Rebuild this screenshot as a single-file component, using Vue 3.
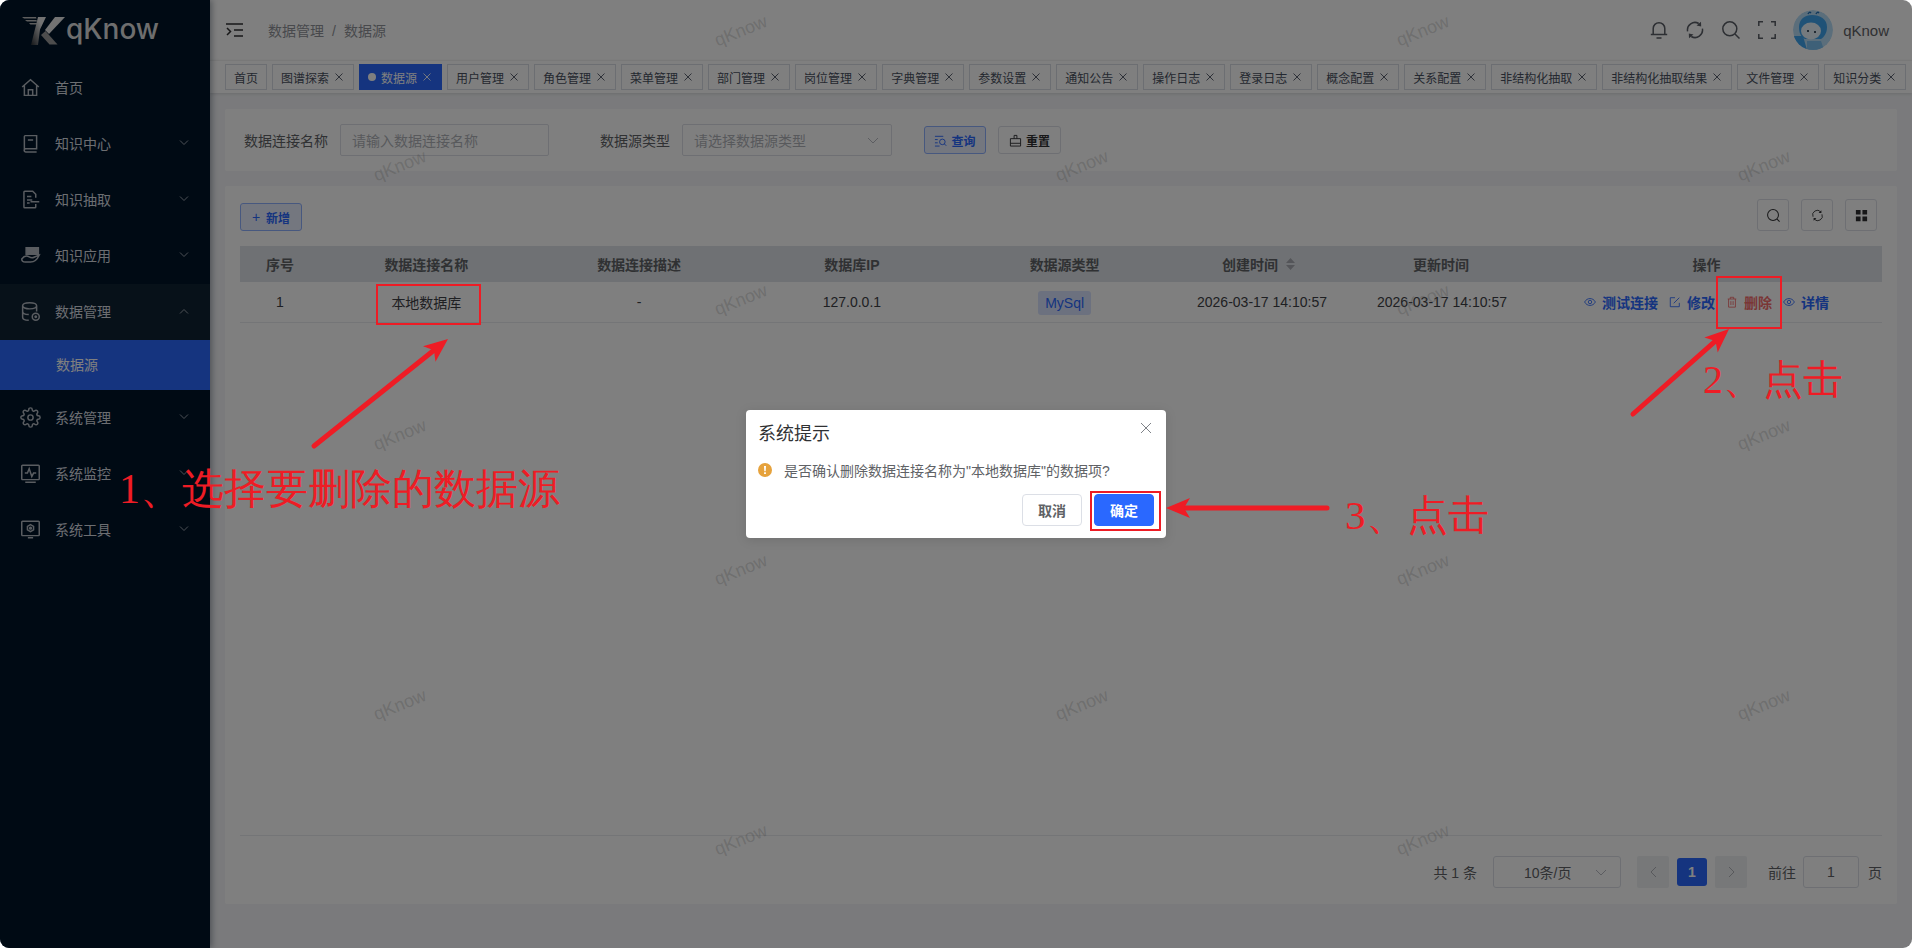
<script setup>
const gear =
  'M19.4 15a1.65 1.65 0 0 0 .33 1.82l.06.06a2 2 0 0 1 0 2.83 2 2 0 0 1-2.83 0l-.06-.06a1.65 1.65 0 0 0-1.82-.33 1.65 1.65 0 0 0-1 1.51V21a2 2 0 0 1-2 2 2 2 0 0 1-2-2v-.09A1.65 1.65 0 0 0 9 19.4a1.65 1.65 0 0 0-1.82.33l-.06.06a2 2 0 0 1-2.83 0 2 2 0 0 1 0-2.83l.06-.06a1.65 1.65 0 0 0 .33-1.82 1.65 1.65 0 0 0-1.51-1H3a2 2 0 0 1-2-2 2 2 0 0 1 2-2h.09A1.65 1.65 0 0 0 4.6 9a1.65 1.65 0 0 0-.33-1.82l-.06-.06a2 2 0 0 1 0-2.83 2 2 0 0 1 2.83 0l.06.06a1.65 1.65 0 0 0 1.82.33H9a1.65 1.65 0 0 0 1-1.51V3a2 2 0 0 1 2-2 2 2 0 0 1 2 2v.09a1.65 1.65 0 0 0 1 1.51 1.65 1.65 0 0 0 1.82-.33l.06-.06a2 2 0 0 1 2.83 0 2 2 0 0 1 0 2.83l-.06.06a1.65 1.65 0 0 0-.33 1.82V9a1.65 1.65 0 0 0 1.51 1H21a2 2 0 0 1 2 2 2 2 0 0 1-2 2h-.09a1.65 1.65 0 0 0-1.51 1z'

const menus = [
  { label: '首页', paths: ['M2.5 11.5 12 3l9.5 8.5M5 9.5V21h14V9.5M9.5 21v-6.5h5V21'] },
  { label: '知识中心', arrow: true, paths: ['M5 20V4a1 1 0 0 1 1-1h13v15H6.5a1.8 1.8 0 0 0 0 3.6H19M9 8h6'] },
  {
    label: '知识抽取',
    arrow: true,
    paths: ['M18 10V6l-3.5-3.5H5.5a1 1 0 0 0-1 1v17a1 1 0 0 0 1 1H17a1 1 0 0 0 1-1v-3.5M8 8.5h5M8 12.5h6M8 16h3M12 14.5h10'],
  },
  {
    label: '知识应用',
    arrow: true,
    solid: 'M7 3h14v7.5H7z',
    paths: ['M2 16c2.5-3.5 6-4 8.5-2.5 2 1.2 4 1.2 5.5.5l6-2.5c-1.5 3.5-5 8-10 8H6c-2.5 0-4-1.5-4-3.5z'],
  },
  {
    label: '数据管理',
    arrow: true,
    open: true,
    paths: [
      'M3 5.5C3 3.5 6.5 2 11 2s8 1.5 8 3.5S15.5 9 11 9 3 7.5 3 5.5zM3 5.5v13c0 2 3 3.5 7 3.5M19 5.5V12M3 12c0 2 3 3.5 7 3.5',
      'M18 14a4 4 0 1 0 0 8 4 4 0 0 0 0-8zM18 17.2a.8.8 0 1 0 0 1.6.8.8 0 0 0 0-1.6z',
    ],
  },
  { label: '系统管理', arrow: true, paths: [gear, 'M12 9a3 3 0 1 0 0 6 3 3 0 0 0 0-6z'] },
  {
    label: '系统监控',
    arrow: true,
    paths: ['M3 2.5h18a1 1 0 0 1 1 1V18a1 1 0 0 1-1 1H3a1 1 0 0 1-1-1V3.500a1 1 0 0 1 1-1zM6 22h12M5.500 11.500h3l2-5 3 9 2-4h3'],
  },
  {
    label: '系统工具',
    arrow: true,
    paths: ['M3 2.500h18a1 1 0 0 1 1 1V18a1 1 0 0 1-1 1H3a1 1 0 0 1-1-1V3.500a1 1 0 0 1 1-1zM9 21.500h6', 'M12 6.500l3.500 2v4l-3.500 2-3.500-2v-4zM12 9.500a1 1 0 1 0 0 2 1 1 0 0 0 0-2z'],
  },
]

const tabs = [
  { label: '首页', fixed: true },
  { label: '图谱探索' },
  { label: '数据源', active: true },
  { label: '用户管理' },
  { label: '角色管理' },
  { label: '菜单管理' },
  { label: '部门管理' },
  { label: '岗位管理' },
  { label: '字典管理' },
  { label: '参数设置' },
  { label: '通知公告' },
  { label: '操作日志' },
  { label: '登录日志' },
  { label: '概念配置' },
  { label: '关系配置' },
  { label: '非结构化抽取' },
  { label: '非结构化抽取结果' },
  { label: '文件管理' },
  { label: '知识分类' },
]

const watermarks = []
const rowTops = [31, 166, 300, 435, 570, 705, 840]
rowTops.forEach((y, index) => {
  const xs = index % 2 === 0 ? [741, 1423] : [400, 1082, 1764]
  xs.forEach((x) => watermarks.push({ left: `${x - 210}px`, top: `${y}px` }))
})

// arrow line and head worked out from its two ends
const makeArrow = (x1, y1, x2, y2) => {
  const angle = Math.atan2(y2 - y1, x2 - x1)
  const point = (back, side) => {
    const px = x2 - back * Math.cos(angle) - side * Math.sin(angle)
    const py = y2 - back * Math.sin(angle) + side * Math.cos(angle)
    return `${px.toFixed(1)},${py.toFixed(1)}`
  }
  return {
    x1,
    y1,
    x2: Number(point(16, 0).split(',')[0]),
    y2: Number(point(16, 0).split(',')[1]),
    head: [point(0, 0), point(24, 10), point(18, 0), point(24, -10)].join(' '),
  }
}

const arrows = [makeArrow(314, 446, 448, 339), makeArrow(1633, 414, 1729, 329), makeArrow(1327, 508, 1166, 508)]
</script>

<template>
  <div class="page">
    <aside class="side">
      <div class="logo">
        <svg class="logo__mark" viewBox="20 16 46 31">
          <defs>
            <linearGradient id="logoFade" x1="0" y1="1" x2="1" y2="0">
              <stop offset="0" stop-color="#2a2d31" />
              <stop offset="0.7" stop-color="#e6e6e6" />
            </linearGradient>
          </defs>
          <path fill="#bdbdbd" d="M22 18h14l.5 1.600H24zM25 21h11.500l.5 1.500H27zM29 24h8l.4 1.500h-7z" />
          <path fill="url(#logoFade)" d="M38 18h8l-6 12.500L38 46h-7z" />
          <path fill="#e6e6e6" d="M55 18h10L49 35l-4-4z" />
          <path fill="#9a9a9a" d="M45.500 32 57.500 45.500h-8L41 36z" />
        </svg>
        <span class="logo__text">qKnow</span>
      </div>

      <nav class="menu">
        <template v-for="item in menus" :key="item.label">
          <div class="menu__item" :class="{ 'is-open': item.open }">
            <svg class="menu__icon" viewBox="0 0 24 24">
              <path v-if="item.solid" class="menu__solid" :d="item.solid" />
              <path v-for="d in item.paths" :key="d" :d="d" />
            </svg>
            <span class="menu__label">{{ item.label }}</span>
            <svg v-if="item.arrow" class="menu__arrow" viewBox="0 0 10 6">
              <path :d="item.open ? 'M1 5.500 5 1.500l4 4' : 'M1 .5l4 4 4-4'" />
            </svg>
          </div>
          <div v-if="item.open" class="menu__sub">数据源</div>
        </template>
      </nav>
    </aside>

    <div class="main">
      <header class="top">
        <svg class="top__toggle" viewBox="0 0 17 14">
          <path d="M0 1h17M8 7h9M8 13h9M1 5l3.500 3.500L1 12" />
        </svg>
        <div class="crumb">
          <span>数据管理</span>
          <span class="crumb__sep">/</span>
          <span>数据源</span>
        </div>
        <div class="top__right">
          <svg class="top__icon" viewBox="0 0 18 18">
            <path d="M3.200 13.500V7.500a5.800 5.800 0 0 1 11.600 0v6M.8 13.500h16.400M6.500 17h5" />
          </svg>
          <svg class="top__icon" viewBox="0 0 18 18">
            <path d="M1.600 10.300A7.500 7.500 0 0 1 12.750 2.500M16.400 7.700A7.500 7.500 0 0 1 5.250 15.500" />
            <path class="top__solid" d="M15 .8 15.200 5.500 10.500 4.500zM3 17.200 2.800 12.500 7.500 13.500z" />
          </svg>
          <svg class="top__icon" viewBox="0 0 18 18">
            <circle cx="7.800" cy="7.800" r="7" />
            <path d="m13 13 4.500 4.500" />
          </svg>
          <svg class="top__icon" viewBox="0 0 18 18">
            <path d="M.8 5V.8h4.200M13 .8h4.200V5M17.200 13v4.200H13M5 17.200H.8V13" />
          </svg>
          <svg class="avatar" viewBox="0 0 40 40">
            <circle cx="20" cy="20" r="20" fill="#b6dcf6" />
            <path fill="#3fa4ee" d="M6 17c0-8 6-12 13-12 8 0 15 4 15 12 0 6-3 10-6 12H12c-4-2-6-6-6-12z" />
            <ellipse cx="18" cy="21" rx="10" ry="8.500" fill="#e9f5fd" />
            <circle cx="15" cy="21" r="1" fill="#123" />
            <circle cx="22" cy="22" r="1" fill="#123" />
            <path d="M15 4c1-2 2-2 3-1M23 4c1-2 2-2 3-1" fill="none" stroke="#1d6fb8" stroke-width="1.500" />
            <path fill="#3fa4ee" d="M0 26h10l4 14H4z" />
            <path fill="#7cc0f0" d="M14 31h14l3 9H14z" />
          </svg>
          <span class="top__name">qKnow</span>
        </div>
      </header>

      <div class="tabs">
        <div v-for="tab in tabs" :key="tab.label" class="tab" :class="{ 'is-active': tab.active, 'is-fixed': tab.fixed }">
          <i v-if="tab.active" class="tab__dot"></i>
          <span>{{ tab.label }}</span>
          <svg v-if="!tab.fixed" class="tab__close" viewBox="0 0 8 8"><path d="m.5.5 7 7M7.500.5l-7 7" /></svg>
        </div>
      </div>

      <div class="content">
        <section class="search card">
          <label class="search__label">数据连接名称</label>
          <div class="field field--input">请输入数据连接名称</div>
          <label class="search__label search__label--next">数据源类型</label>
          <div class="field field--select">
            <span>请选择数据源类型</span>
            <svg class="chevron" viewBox="0 0 12 7"><path d="m1 1 5 5 5-5" /></svg>
          </div>
          <button type="button" class="btn btn--query">
            <svg viewBox="0 0 14 14"><path d="M1 2.500h9M1 6h3M1 9.500h3M1 13h5" /><circle cx="9" cy="8.500" r="3" /><path d="m11.200 10.700 2 2" /></svg>
            查询
          </button>
          <button type="button" class="btn btn--reset">
            <svg viewBox="0 0 14 14"><path d="M5.500 5V1.500h3V5M1.500 5h11v8h-11zM1.500 10h11" /></svg>
            重置
          </button>
        </section>

        <section class="board card">
          <div class="board__bar">
            <button type="button" class="btn btn--add"><span class="btn__plus">+</span>新增</button>
            <div class="board__tools">
              <button type="button" class="tool">
                <svg viewBox="0 0 16 16"><circle cx="7.500" cy="7.500" r="5.800" /><path d="m11.800 11.800 2.700 2.700" /></svg>
              </button>
              <button type="button" class="tool">
                <svg class="tool__small" viewBox="0 0 16 16">
                  <path d="M2.500 9.500A5.700 5.700 0 0 1 12 3.500M13.500 6.500A5.700 5.700 0 0 1 4 12.500" />
                  <path class="tool__solid" d="M12.800 1.500V5H9.300zM3.200 14.500V11h3.500z" />
                </svg>
              </button>
              <button type="button" class="tool">
                <svg viewBox="0 0 16 16"><path class="tool__solid" d="M2 2h5v5H2zM9 2h5v5H9zM2 9h5v5H2zM9 9h5v5H9z" /></svg>
              </button>
            </div>
          </div>

          <div class="table">
            <div class="table__row table__row--head">
              <div>序号</div>
              <div>数据连接名称</div>
              <div>数据连接描述</div>
              <div>数据库IP</div>
              <div>数据源类型</div>
              <div class="table__sort">
                创建时间
                <svg viewBox="0 0 10 12"><path d="M5 0l4.500 5H.5zM5 12 .5 7h9z" /></svg>
              </div>
              <div>更新时间</div>
              <div>操作</div>
            </div>
            <div class="table__row table__row--body">
              <div>1</div>
              <div>本地数据库</div>
              <div>-</div>
              <div>127.0.0.1</div>
              <div><span class="tag">MySql</span></div>
              <div class="table__date">2026-03-17 14:10:57</div>
              <div class="table__date">2026-03-17 14:10:57</div>
              <div class="actions">
                <a class="action">
                  <svg viewBox="0 0 14 14"><path d="M.7 7C2.300 4.200 4.500 3 7 3s4.700 1.200 6.300 4C11.700 9.800 9.500 11 7 11S2.300 9.800.7 7z" /><circle cx="7" cy="7" r="2" /></svg>
                  测试连接
                </a>
                <a class="action">
                  <svg viewBox="0 0 14 14"><path d="M12 8v4.500H1.500V2H7M5.500 8.500 12 2" /></svg>
                  修改
                </a>
                <a class="action action--danger">
                  <svg viewBox="0 0 14 14"><path d="M2 3.500h10M5 3.500v-2h4v2M3 3.500v9.500h8V3.500M5.700 6v4.500M8.300 6v4.500" /></svg>
                  删除
                </a>
                <a class="action">
                  <svg viewBox="0 0 14 14"><path d="M.7 7C2.300 4.200 4.500 3 7 3s4.700 1.200 6.300 4C11.700 9.800 9.500 11 7 11S2.300 9.800.7 7z" /><circle cx="7" cy="7" r="2" /></svg>
                  详情
                </a>
              </div>
            </div>
          </div>

          <div class="pager">
            <span class="pager__total">共 1 条</span>
            <div class="pager__size">
              <span>10条/页</span>
              <svg class="chevron" viewBox="0 0 12 7"><path d="m1 1 5 5 5-5" /></svg>
            </div>
            <button type="button" class="pager__btn">
              <svg viewBox="0 0 7 12"><path d="M6 1 1 6l5 5" /></svg>
            </button>
            <span class="pager__num">1</span>
            <button type="button" class="pager__btn">
              <svg viewBox="0 0 7 12"><path d="m1 1 5 5-5 5" /></svg>
            </button>
            <span class="pager__goto">前往</span>
            <div class="pager__input">1</div>
            <span class="pager__unit">页</span>
          </div>
        </section>
      </div>

      <span v-for="mark in watermarks" :key="mark.left + mark.top" class="watermark" :style="mark">qKnow</span>
    </div>

    <div class="mask">
      <div class="dialog">
        <div class="dialog__title">系统提示</div>
        <svg class="dialog__close" viewBox="0 0 12 12"><path d="m1 1 10 10M11 1 1 11" /></svg>
        <div class="dialog__msg">
          <svg class="dialog__warn" viewBox="0 0 14 14">
            <circle cx="7" cy="7" r="7" fill="#e6a23c" />
            <path d="M6 3h2l-.3 5.200H6.300zM6.100 9.300h1.800v1.800H6.100z" fill="#fff" />
          </svg>
          <span>是否确认删除数据连接名称为"本地数据库"的数据项?</span>
        </div>
        <div class="dialog__foot">
          <button type="button" class="dialog__btn">取消</button>
          <button type="button" class="dialog__btn dialog__btn--ok">确定</button>
        </div>
      </div>
    </div>

    <svg class="marks" viewBox="0 0 1912 948">
      <rect x="377" y="285" width="103" height="39" />
      <rect x="1717" y="277" width="64" height="51" />
      <rect x="1091" y="492" width="69" height="38" />
      <g v-for="arrow in arrows" :key="arrow.x1">
        <line :x1="arrow.x1" :y1="arrow.y1" :x2="arrow.x2" :y2="arrow.y2" />
        <polygon :points="arrow.head" />
      </g>
    </svg>
    <div class="note note--one">1、选择要删除的数据源</div>
    <div class="note note--two">2、点击</div>
    <div class="note note--three">3、点击</div>
  </div>
</template>

<style>
html,
body {
  margin: 0;
  background: #fff;
  overflow: hidden;
}
</style>

<style scoped>
.page {
  position: relative;
  display: flex;
  width: 100vw;
  height: 100vh;
  overflow: hidden;
  border-radius: 9px;
  background: #f4f5f8;
  font-family: 'Liberation Sans', 'Noto Sans CJK SC', sans-serif;
  font-size: 14px;
  color: #303133;
}

.side {
  position: relative;
  z-index: 2;
  flex: 0 0 210px;
  background: #001529;
  box-shadow: 2px 0 6px rgba(0, 21, 41, 0.35);
}

.logo {
  display: flex;
  align-items: center;
  height: 60px;
  padding-left: 20px;
  box-sizing: border-box;
}

.logo__mark {
  width: 46px;
  height: 31px;
  flex-shrink: 0;
}

.logo__text {
  font-family: Inter, 'Liberation Sans', sans-serif;
  font-size: 28px;
  font-weight: 500;
  line-height: 1;
  color: #dcdcdc;
  margin-top: -2px;
}

.menu__item {
  display: flex;
  align-items: center;
  height: 56px;
  padding: 0 0 2px 20px;
  color: #d8dce2;
  box-sizing: border-box;
}

.menu__item.is-open {
  background: #0f2233;
}

.menu__icon {
  width: 21px;
  height: 21px;
  flex-shrink: 0;
  margin-right: 14px;
  fill: none;
  stroke: #b4bac2;
  stroke-width: 1.7;
}

.menu__solid {
  fill: #b4bac2;
}

.menu__label {
  flex: 1;
}

.menu__arrow {
  width: 10px;
  height: 6px;
  margin-right: 21px;
  fill: none;
  stroke: #9aa2ac;
  stroke-width: 1;
}

.menu__sub {
  height: 50px;
  padding-left: 56px;
  line-height: 50px;
  background: #2a68ff;
  color: #fff;
}

.main {
  position: relative;
  flex: 1;
  min-width: 0;
  display: flex;
  flex-direction: column;
}

.top {
  display: flex;
  align-items: center;
  flex: 0 0 60px;
  padding: 0 23px 0 16px;
  background: #fff;
  box-sizing: border-box;
}

.top__toggle {
  width: 17px;
  height: 14px;
  margin-right: 25px;
  fill: none;
  stroke: #303133;
  stroke-width: 1.500;
}

.crumb {
  display: flex;
  align-items: baseline;
  gap: 8px;
  color: #909399;
  font-size: 14px;
}

.crumb__sep {
  color: #909399;
}

.top__right {
  margin-left: auto;
  display: flex;
  align-items: center;
}

.top__icon {
  width: 18px;
  height: 18px;
  margin-right: 18px;
  fill: none;
  stroke: #5a5e66;
  stroke-width: 1.500;
}

.top__solid {
  fill: #5a5e66;
  stroke: none;
}

.avatar {
  width: 40px;
  height: 40px;
  margin-left: -1px;
  margin-right: 10px;
  border-radius: 50%;
}

.top__name {
  font-size: 15px;
  color: #606266;
}

.tabs {
  position: relative;
  z-index: 1;
  display: flex;
  align-items: center;
  gap: 5px;
  flex: 0 0 33px;
  padding-left: 15px;
  background: #fff;
  border-top: 1px solid #f0f0f0;
  box-shadow: 0 1px 3px rgba(0, 0, 0, 0.12);
  box-sizing: border-box;
  overflow: hidden;
}

.tab {
  flex-shrink: 0;
  display: flex;
  align-items: center;
  height: 26px;
  padding: 0 10px 0 8px;
  border: 1px solid #d8dce5;
  background: #fff;
  font-size: 12px;
  color: #495060;
  box-sizing: border-box;
}

.tab.is-fixed {
  padding: 0 8px;
}

.tab.is-active {
  border-color: #2a68ff;
  background: #2a68ff;
  color: #fff;
}

.tab__dot {
  width: 8px;
  height: 8px;
  margin-right: 5px;
  border-radius: 50%;
  background: #fff;
}

.tab__close {
  width: 8px;
  height: 8px;
  margin-left: 6px;
  fill: none;
  stroke: currentColor;
  stroke-width: 0.9;
}

.content {
  flex: 1;
  min-height: 0;
  display: flex;
  flex-direction: column;
  gap: 15px;
  padding: 16px 15px 44px;
}

.card {
  border-radius: 2px;
  background: #fff;
}

.search {
  flex: 0 0 62px;
  display: flex;
  align-items: center;
  padding-left: 19px;
  box-sizing: border-box;
}

.search__label {
  margin-right: 12px;
  color: #606266;
}

.search__label--next {
  margin-left: 51px;
}

.field {
  display: flex;
  align-items: center;
  justify-content: space-between;
  width: 209px;
  height: 32px;
  padding: 0 12px 0 11px;
  border: 1px solid #dcdfe6;
  border-radius: 2px;
  color: #b0b3b9;
  box-sizing: border-box;
}

.field--select {
  width: 210px;
  margin-right: 32px;
}

.chevron {
  width: 12px;
  height: 7px;
  fill: none;
  stroke: #b8bbc2;
  stroke-width: 1;
}

.btn {
  display: inline-flex;
  align-items: center;
  justify-content: center;
  gap: 4px;
  height: 28px;
  padding: 0;
  border: 1px solid #dcdfe6;
  border-radius: 3px;
  background: #fff;
  font: inherit;
  font-size: 12px;
  font-weight: 600;
  color: #303133;
}

.btn svg {
  width: 13px;
  height: 13px;
  fill: none;
  stroke: currentColor;
  stroke-width: 1;
}

.btn--query {
  width: 62px;
  margin-right: 12px;
  border-color: #8fb0ff;
  background: #e9efff;
  color: #2a68ff;
}

.btn--reset {
  width: 63px;
}

.btn--add {
  width: 62px;
  gap: 6px;
  border-color: #8fb0ff;
  background: #e9efff;
  color: #2a68ff;
}

.btn__plus {
  font-size: 14px;
  font-weight: 400;
}

.board {
  flex: 1;
  min-height: 0;
  display: flex;
  flex-direction: column;
  padding: 13px 15px 16px;
}

.board__bar {
  display: flex;
  align-items: flex-end;
  justify-content: space-between;
  padding-right: 5px;
  margin-bottom: 15px;
}

.board__tools {
  display: flex;
  gap: 12px;
}

.tool {
  display: flex;
  align-items: center;
  justify-content: center;
  width: 32px;
  height: 32px;
  padding: 0;
  border: 1px solid #dcdfe6;
  border-radius: 3px;
  background: #fff;
}

.tool svg {
  width: 15px;
  height: 15px;
  fill: none;
  stroke: #303133;
  stroke-width: 1.100;
}

.tool svg.tool__small {
  width: 13px;
  height: 13px;
}

.tool__solid {
  fill: #303133;
  stroke: none;
}

.table {
  flex: 1;
  min-height: 0;
  border-bottom: 1px solid #e8eaee;
}

.table__row {
  display: grid;
  grid-template-columns: 80px repeat(4, 1fr) 180px 180px 351px;
  align-items: center;
  text-align: center;
}

.table__row--head {
  height: 36px;
  background: #dfe2e8;
  color: #606266;
  font-weight: 600;
}

.table__row--body {
  height: 41px;
  border-bottom: 1px solid #e8eaee;
  box-sizing: border-box;
  color: #3f4146;
}

.table__date {
  padding-left: 2px;
}

.table__sort {
  display: flex;
  align-items: center;
  justify-content: center;
  gap: 7px;
  padding-right: 4px;
}

.table__sort svg {
  width: 11px;
  height: 12px;
  fill: #a8abb2;
}

.tag {
  display: inline-block;
  height: 24px;
  margin-top: 2px;
  padding: 0 7px;
  line-height: 24px;
  border-radius: 3px;
  background: #d9e3ff;
  color: #2a68ff;
}

.actions {
  display: flex;
  justify-content: center;
  gap: 11px;
}

.action {
  display: inline-flex;
  align-items: center;
  gap: 6px;
  color: #2a68ff;
  font-weight: 600;
}

.action svg {
  width: 12px;
  height: 12px;
  fill: none;
  stroke: currentColor;
  stroke-width: 1;
}

.action--danger {
  color: #f56c6c;
}

.pager {
  display: flex;
  align-items: center;
  justify-content: flex-end;
  height: 32px;
  margin-top: 20px;
  color: #606266;
}

.pager__size {
  display: flex;
  align-items: center;
  justify-content: space-between;
  width: 128px;
  height: 32px;
  margin: 0 16px;
  padding: 0 13px 0 30px;
  border: 1px solid #dcdfe6;
  border-radius: 3px;
  box-sizing: border-box;
}

.pager__btn {
  display: flex;
  align-items: center;
  justify-content: center;
  width: 32px;
  height: 32px;
  padding: 0;
  border: none;
  border-radius: 2px;
  background: #eef0f3;
}

.pager__btn svg {
  width: 7px;
  height: 12px;
  fill: none;
  stroke: #b0b3b9;
  stroke-width: 1;
}

.pager__num {
  width: 30px;
  height: 28px;
  margin: 0 8px;
  line-height: 28px;
  text-align: center;
  border-radius: 3px;
  background: #2a68ff;
  color: #fff;
  font-weight: 600;
}

.pager__goto {
  margin-left: 21px;
}

.pager__input {
  width: 56px;
  height: 32px;
  margin: 0 9px 0 7px;
  line-height: 30px;
  text-align: center;
  border: 1px solid #dcdfe6;
  border-radius: 3px;
  box-sizing: border-box;
}

.watermark {
  position: absolute;
  z-index: 1;
  font-size: 18px;
  color: rgba(140, 140, 140, 0.3);
  transform: translate(-50%, -50%) rotate(-22deg);
  pointer-events: none;
}

.mask {
  position: absolute;
  inset: 0;
  z-index: 5;
  display: flex;
  align-items: center;
  justify-content: center;
  background: rgba(0, 0, 0, 0.5);
}

.dialog {
  position: relative;
  width: 420px;
  height: 128px;
  padding: 12px;
  border-radius: 4px;
  background: #fff;
  box-shadow: 0 2px 12px rgba(0, 0, 0, 0.12);
  box-sizing: border-box;
}

.dialog__title {
  font-size: 18px;
  line-height: 24px;
  color: #303133;
}

.dialog__close {
  position: absolute;
  top: 12px;
  right: 14px;
  width: 12px;
  height: 12px;
  fill: none;
  stroke: #7f8288;
  stroke-width: 1;
}

.dialog__msg {
  display: flex;
  align-items: center;
  gap: 12px;
  height: 20px;
  margin-top: 14px;
  color: #606266;
}

.dialog__warn {
  width: 14px;
  height: 14px;
  flex-shrink: 0;
}

.dialog__foot {
  display: flex;
  justify-content: flex-end;
  gap: 12px;
  margin-top: 14px;
}

.dialog__btn {
  width: 60px;
  height: 32px;
  padding: 0;
  border: 1px solid #dcdfe6;
  border-radius: 4px;
  background: #fff;
  font: inherit;
  font-weight: 600;
  color: #606266;
}

.dialog__btn--ok {
  border-color: #2a68ff;
  background: #2a68ff;
  color: #fff;
}

.marks {
  position: absolute;
  inset: 0;
  z-index: 6;
  width: 100%;
  height: 100%;
  pointer-events: none;
}

.marks rect {
  fill: none;
  stroke: #ee1c25;
  stroke-width: 2;
}

.marks line {
  stroke: #ee1c25;
  stroke-width: 5;
  stroke-linecap: round;
}

.marks polygon {
  fill: #ee1c25;
}

.note {
  position: absolute;
  z-index: 6;
  font-family: 'Liberation Serif', serif;
  font-size: 41px;
  line-height: 44px;
  white-space: nowrap;
  color: #ee1c25;
}

.note--one {
  left: 119px;
  top: 467px;
  font-size: 42px;
}

.note--two {
  left: 1703px;
  top: 358px;
  font-size: 40px;
}

.note--three {
  left: 1345px;
  top: 493px;
}
</style>
